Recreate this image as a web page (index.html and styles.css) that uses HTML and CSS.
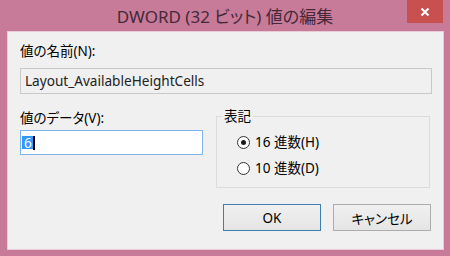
FILE: index.html
```html
<!DOCTYPE html>
<html lang="ja">
<head>
<meta charset="utf-8">
<link rel="stylesheet" href="styles.css">
</head>
<body>
<div class="window">
  <div class="titlebar">
    <div class="title">DWORD (32 ビット) 値の編集</div>
    <div class="close">
      <svg width="10" height="10" viewBox="0 0 10 10"><path d="M1.5 1.5 L8.5 8.5 M8.5 1.5 L1.5 8.5" stroke="#ffffff" stroke-width="2" fill="none"/></svg>
    </div>
  </div>
  <div class="client">
    <div class="label">値の名前(N):</div>
    <div class="field readonly">Layout_AvailableHeightCells</div>
    <div class="mid">
      <div class="data-col">
        <div class="label">値のデータ(V):</div>
        <div class="field edit"><span class="sel">6</span><span class="caret"></span></div>
      </div>
      <fieldset class="group">
        <legend>表記</legend>
        <div class="radio"><span class="dot checked"></span>16 進数(H)</div>
        <div class="radio"><span class="dot"></span>10 進数(D)</div>
      </fieldset>
    </div>
    <div class="buttons">
      <div class="btn default">OK</div>
      <div class="btn">キャンセル</div>
    </div>
  </div>
</div>
</body>
</html>
```
FILE: styles.css
```css
html, body {
  margin: 0;
  padding: 0;
}
body {
  font-family: "Noto Sans", "Noto Sans CJK JP", sans-serif;
  font-size: 13.5px;
  font-feature-settings: "palt";
  color: #000;
}
.window {
  width: 450px;
  height: 256px;
  background: #c77b98;
  display: flex;
  flex-direction: column;
  box-sizing: border-box;
}
.titlebar {
  height: 32px;
  display: grid;
  grid-template-columns: 1fr auto 1fr;
  flex: none;
}
.title {
  grid-column: 2;
  font-size: 17px;
  line-height: 30px;
  padding-top: 2px;
  color: #46283a;
  white-space: nowrap;
}
.close {
  grid-column: 3;
  justify-self: end;
  align-self: start;
  width: 36px;
  height: 23px;
  margin-right: 7px;
  background: #c8504f;
  display: flex;
  align-items: center;
  justify-content: center;
}
.client {
  flex: 1;
  margin: 0 7px 7px 8px;
  background: #f0f0f0;
  padding: 11px 11px 0 12px;
  display: flex;
  flex-direction: column;
  box-shadow: 0 0 0 1px #e8cbd6;
}
.label {
  line-height: 16px;
  height: 16px;
}
.field {
  box-sizing: border-box;
  border: 1px solid #c9c9c9;
  margin-top: 9px;
  height: 26px;
  line-height: 24px;
  padding-left: 4px;
  font-size: 13.6px;
  white-space: nowrap;
}
.readonly {
  background: #f0f0f0;
  color: #222;
}
.mid {
  display: grid;
  grid-template-columns: 183px 214px;
  column-gap: 13px;
  margin-top: 16px;
  align-items: start;
}
.data-col {
  display: flex;
  flex-direction: column;
}
.edit {
  margin-top: 4px;
  height: 25px;
  background: #fff;
  border-color: #7eb4ea;
  padding-left: 1px;
  display: flex;
  align-items: center;
}
.sel {
  background: #3399ff;
  color: #fff;
  line-height: 13px;
  height: 13px;
  padding: 0 1px 0 2px;
  font-size: 13.6px;
}
.caret {
  width: 2px;
  height: 14px;
  background: #000;
}
.group {
  margin: -2px 0 0 0;
  min-width: 0;
  border: 1px solid #dcdcdc;
  padding: 10px 0 11px 19px;
  display: flex;
  flex-direction: column;
  gap: 10px;
}
.group legend {
  margin-left: -14px;
  padding: 0 2px;
  line-height: 16px;
}
.radio {
  display: flex;
  align-items: center;
  line-height: 16px;
  height: 16px;
}
.dot {
  box-sizing: border-box;
  width: 13px;
  height: 13px;
  border-radius: 50%;
  border: 1px solid #333;
  background: #fff;
  margin-left: 1px;
  margin-right: 5px;
  display: flex;
  align-items: center;
  justify-content: center;
}
.dot.checked::after {
  content: "";
  width: 5px;
  height: 5px;
  border-radius: 50%;
  background: #1a1a1a;
}
.buttons {
  display: flex;
  justify-content: flex-end;
  gap: 12px;
  margin-top: 16px;
  margin-right: 1px;
}
.btn {
  box-sizing: border-box;
  width: 98px;
  height: 27px;
  border: 1px solid #acacac;
  background: linear-gradient(#f0f0f0, #e5e5e5);
  display: flex;
  align-items: center;
  justify-content: center;
}
.btn.default {
  border-color: #3c7fb1;
}
```
